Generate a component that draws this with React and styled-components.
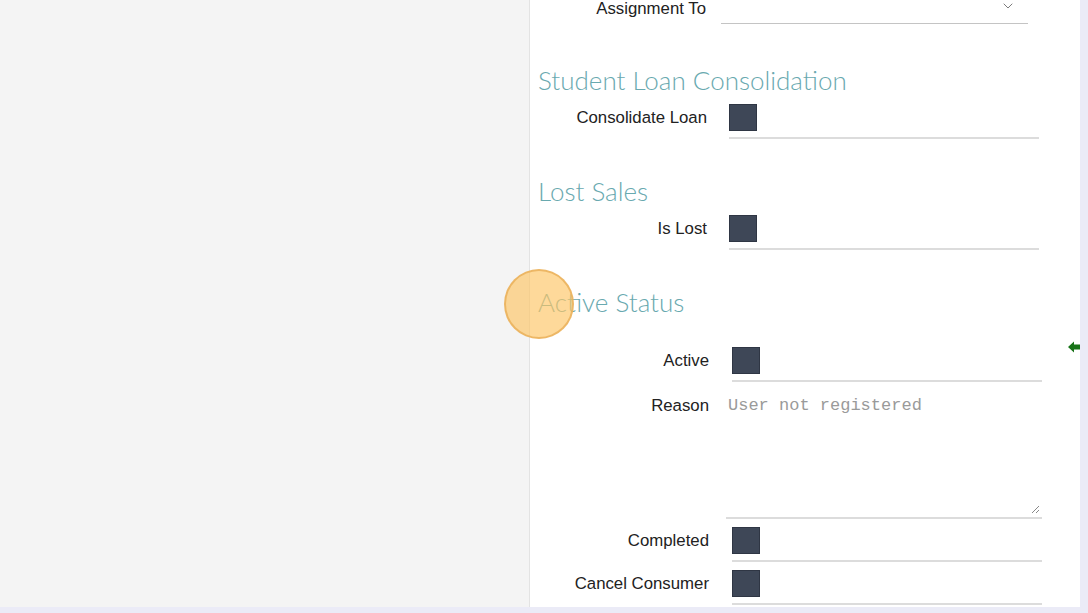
import styled, { createGlobalStyle } from "styled-components";
import { ChevronDown } from "lucide-react";

const Global = createGlobalStyle`
  html, body { margin: 0; padding: 0; }
  body {
    background: #ebebf7;
    font-family: "Liberation Sans", Arial, sans-serif;
    overflow: hidden;
  }
`;

const Page = styled.div`
  position: relative;
  display: flex;
  width: 1088px;
  height: 607px;
  padding-right: 8px;
  box-sizing: border-box;
  overflow: hidden;
`;

const SidePane = styled.div`
  width: 530px;
  flex-shrink: 0;
  background: #f4f4f4;
  border-right: 1px solid #e3e3e3;
  box-sizing: border-box;
`;

const Panel = styled.div`
  position: relative;
  flex: 1;
  background: #fff;
  padding: 0 0 0 8px;
  overflow: hidden;
`;

const Content = styled.div`
  margin-top: -9px;
`;

const Heading = styled.h2`
  margin: ${(p) => p.$top}px 0 0;
  font-family: Lato, "Open Sans", sans-serif;
  font-weight: 300;
  font-size: 26px;
  line-height: 30px;
  color: #69a9af;
`;

const Group = styled.div`
  display: flex;
  flex-direction: column;
  gap: ${(p) => p.$gap || 0}px;
  margin-top: ${(p) => p.$top || 0}px;
`;

const Row = styled.div`
  display: grid;
  grid-template-columns: ${(p) => p.$label}px ${(p) => p.$field}px;
  column-gap: ${(p) => p.$gap}px;
  align-items: start;
`;

const Label = styled.div`
  text-align: right;
  font-size: 16.8px;
  color: #222;
  line-height: 20px;
  padding-top: ${(p) => p.$pad || 0}px;
`;

const Field = styled.div`
  display: flex;
  align-items: center;
  padding-bottom: 6px;
  margin-left: ${(p) => p.$indent || 0}px;
  border-bottom: 2px solid #dcdcdc;
`;

const Checkbox = styled.span`
  display: block;
  width: 28px;
  height: 27px;
  background: #3e4757;
  border: 1px solid #2f3644;
  box-sizing: border-box;
`;

const Select = styled.div`
  display: flex;
  justify-content: flex-end;
  align-items: center;
  height: 33px;
  padding-right: 12px;
  box-sizing: border-box;
  padding-bottom: 3px;
  border-bottom: 1px solid #c4c4c4;
  color: #666;
`;

const TextArea = styled.div`
  position: relative;
  height: 129px;
  padding: 6px 2px 0;
  box-sizing: border-box;
  border-bottom: 2px solid #dcdcdc;
  font-family: "Liberation Mono", "Courier New", monospace;
  font-size: 17px;
  line-height: 20px;
  color: #9a9a9a;
`;

const Grip = styled.svg`
  position: absolute;
  right: 2px;
  bottom: 3px;
`;

const Highlight = styled.div`
  position: absolute;
  left: 504px;
  top: 269px;
  width: 70px;
  height: 70px;
  border-radius: 50%;
  background: rgba(253, 196, 100, 0.65);
  border: 2px solid rgba(232, 172, 84, 0.75);
  box-sizing: border-box;
  pointer-events: none;
`;

const Arrow = styled.svg`
  position: absolute;
  right: 0;
  top: 341px;
`;

function CheckRow({ label, cols }) {
  return (
    <Row $label={cols[0]} $field={cols[1]} $gap={cols[2]}>
      <Label $pad={4}>{label}</Label>
      <Field $indent={cols[3]}>
        <Checkbox />
      </Field>
    </Row>
  );
}

export default function App() {
  const first = [169, 310, 22, 0];
  const second = [171, 316, 17, 6];
  return (
    <>
      <Global />
      <Page>
        <SidePane />
        <Panel>
          <Content>
            <Row $label={168} $field={307} $gap={15}>
              <Label $pad={8}>Assignment To</Label>
              <Select>
                <ChevronDown size={16} strokeWidth={1.3} />
              </Select>
            </Row>

            <Heading $top={41}>Student Loan Consolidation</Heading>
            <Group $top={9}>
              <CheckRow label="Consolidate Loan" cols={first} />
            </Group>

            <Heading $top={37}>Lost Sales</Heading>
            <Group $top={9}>
              <CheckRow label="Is Lost" cols={first} />
            </Group>

            <Heading $top={37}>Active Status</Heading>
            <Group $top={30} $gap={8}>
              <CheckRow label="Active" cols={second} />
              <Row $label={171} $field={316} $gap={17}>
                <Label $pad={6}>Reason</Label>
                <TextArea>
                  User not registered
                  <Grip width="10" height="10" viewBox="0 0 10 10">
                    <path d="M9 2 L2 9 M9 6 L6 9" stroke="#888" strokeWidth="1" />
                  </Grip>
                </TextArea>
              </Row>
              <CheckRow label="Completed" cols={second} />
              <CheckRow label="Cancel Consumer" cols={second} />
            </Group>
          </Content>

          <Arrow width="12" height="12" viewBox="0 0 12 12">
            <path d="M0 6 L6 0.5 L6 3.5 L12 3.5 L12 8.5 L6 8.5 L6 11.5 Z" fill="#177317" />
          </Arrow>
        </Panel>
        <Highlight />
      </Page>
    </>
  );
}
